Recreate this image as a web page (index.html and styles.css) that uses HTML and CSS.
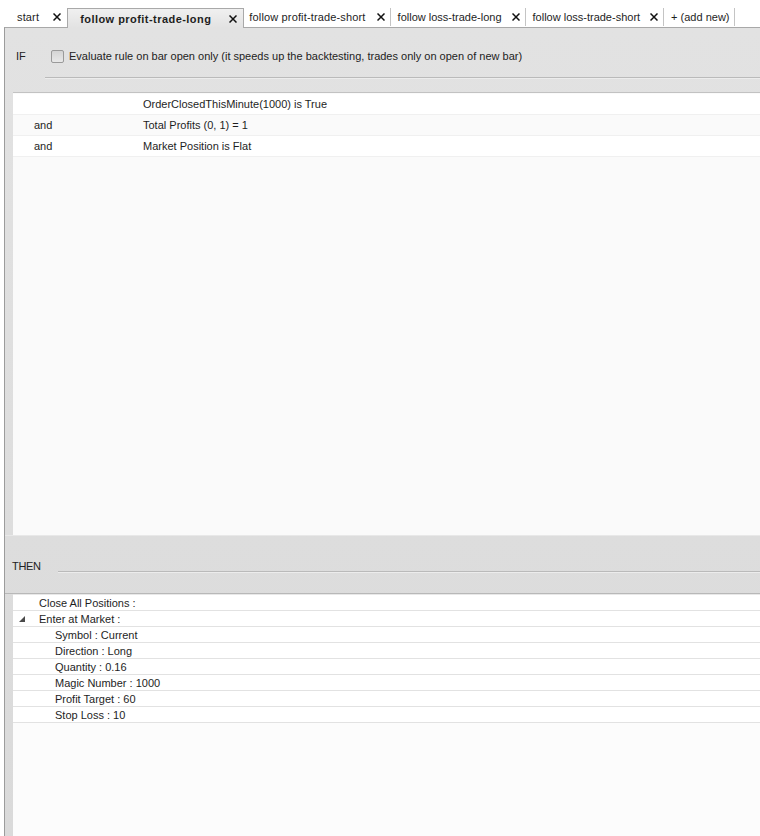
FILE: index.html
```html
<!DOCTYPE html>
<html>
<head>
<meta charset="utf-8">
<link rel="stylesheet" href="styles.css">
</head>
<body>
<div class="tabs">
  <div class="tab first"><span>start</span><svg class="x" viewBox="0 0 8 8"><path d="M0.5 0.5L7.5 7.5M7.5 0.5L0.5 7.5"/></svg></div>
  <div class="tab active"><span>follow profit-trade-long</span><svg class="x" viewBox="0 0 8 8"><path d="M0.5 0.5L7.5 7.5M7.5 0.5L0.5 7.5"/></svg></div>
  <div class="tab sep"><span>follow profit-trade-short</span><svg class="x" viewBox="0 0 8 8"><path d="M0.5 0.5L7.5 7.5M7.5 0.5L0.5 7.5"/></svg></div>
  <div class="tab sep loss"><span>follow loss-trade-long</span><svg class="x" viewBox="0 0 8 8"><path d="M0.5 0.5L7.5 7.5M7.5 0.5L0.5 7.5"/></svg></div>
  <div class="tab sep loss"><span>follow loss-trade-short</span><svg class="x" viewBox="0 0 8 8"><path d="M0.5 0.5L7.5 7.5M7.5 0.5L0.5 7.5"/></svg></div>
  <div class="tab sep add"><span>+ (add new)</span></div>
</div>
<div class="panel">
  <div class="if-area">
    <span class="if-label">IF</span>
    <span class="checkbox"></span>
    <span class="if-text">Evaluate rule on bar open only (it speeds up the backtesting, trades only on open of new bar)</span>
  </div>
  <div class="rule if-rule"></div>
  <div class="cond-table">
    <div class="crow"><span class="c1"></span><span class="c2">OrderClosedThisMinute(1000) is True</span></div>
    <div class="crow alt"><span class="c1">and</span><span class="c2">Total Profits (0, 1) = 1</span></div>
    <div class="crow"><span class="c1">and</span><span class="c2">Market Position is Flat</span></div>
  </div>
  <div class="then-area">
    <span class="then-label">THEN</span>
    <div class="rule then-rule"></div>
  </div>
  <div class="actions">
    <div class="arow"><span class="gut"></span><span class="atext">Close All Positions :</span></div>
    <div class="arow"><span class="gut"><svg class="tri" viewBox="0 0 6 6"><path d="M6 0L6 6L0 6Z"/></svg></span><span class="atext">Enter at Market :</span></div>
    <div class="arow child"><span class="gut"></span><span class="atext">Symbol : Current</span></div>
    <div class="arow child"><span class="gut"></span><span class="atext">Direction : Long</span></div>
    <div class="arow child"><span class="gut"></span><span class="atext">Quantity : 0.16</span></div>
    <div class="arow child"><span class="gut"></span><span class="atext">Magic Number : 1000</span></div>
    <div class="arow child"><span class="gut"></span><span class="atext">Profit Target : 60</span></div>
    <div class="arow child"><span class="gut"></span><span class="atext">Stop Loss : 10</span></div>
  </div>
</div>
</body>
</html>
```

FILE: styles.css
```css
html, body {
  margin: 0;
  padding: 0;
}
body {
  width: 760px;
  height: 836px;
  overflow: hidden;
  background: #ffffff;
  font-family: "Liberation Sans", Arial, sans-serif;
  font-size: 11px;
  color: #1e1e1e;
}
.tabs {
  height: 27px;
  display: flex;
  align-items: flex-end;
  padding-left: 10px;
  box-sizing: border-box;
  background: #fff;
}
.tab {
  height: 19px;
  display: flex;
  align-items: center;
  padding: 0 5px 0 5px;
  box-sizing: border-box;
  position: relative;
  margin-bottom: 1px;
  letter-spacing: 0.15px;
}
.tab span {
  white-space: nowrap;
  line-height: 14px;
}
.tab .x {
  width: 8px;
  height: 8px;
  margin-left: 11px;
  stroke: #111;
  stroke-width: 1.5;
  fill: none;
}
.tab.first {
  padding-left: 7px;
  padding-right: 6px;
}
.tab.first .x {
  margin-left: 14px;
}
.tab.active {
  height: 20px;
  margin-bottom: -1px;
  padding: 0 6px 0 12px;
  font-weight: bold;
  letter-spacing: 0.45px;
  background: linear-gradient(#f0f0f0, #e2e2e2);
  border: 1px solid #a9a9a9;
  border-bottom: none;
  z-index: 2;
}
.tab.active .x {
  margin-left: 18px;
}
.tab.sep::after {
  content: "";
  position: absolute;
  right: 0;
  top: 1px;
  bottom: 0;
  width: 1px;
  background: #c4c4c4;
}
.tab.sep {
  padding-right: 6px;
}
.tab.loss {
  letter-spacing: 0;
  padding-left: 7px;
}
.tab.loss .x {
  margin-left: 10px;
}
.tab.add {
  padding-left: 7px;
  padding-right: 5px;
  letter-spacing: 0;
}
.panel {
  margin-left: 4px;
  height: 809px;
  border-left: 1px solid #9c9c9c;
  border-top: 1px solid #a8a8a8;
  background: linear-gradient(180deg, #e2e2e2 0%, #dadada 100%);
  display: flex;
  flex-direction: column;
  box-sizing: border-box;
}
.if-area {
  height: 49px;
  display: flex;
  align-items: center;
  padding-top: 7px;
  box-sizing: border-box;
}
.if-label {
  margin-left: 11px;
  width: 35px;
  color: #222;
}
.checkbox {
  width: 13px;
  height: 13px;
  box-sizing: border-box;
  border: 1px solid #9a9a9a;
  border-radius: 2px;
  background: linear-gradient(#d4d4d4, #e8e8e8);
  margin-right: 5px;
}
.if-text {
  white-space: nowrap;
  color: #222;
}
.rule {
  height: 1px;
  background: #bababa;
  border-bottom: 1px solid #ececec;
}
.if-rule {
  margin-left: 40px;
}
.cond-table {
  margin-top: 13px;
  margin-left: 8px;
  height: 443px;
  border-top: 1px solid #c2c2c2;
  background: #fafafa;
  box-sizing: border-box;
  padding-top: 1px;
}
.crow {
  height: 21px;
  display: flex;
  align-items: center;
  background: #ffffff;
  border-bottom: 1px solid #f0f0f0;
  box-sizing: border-box;
}
.crow.alt {
  background: #fafafa;
}
.c1 {
  width: 109px;
  padding-left: 21px;
  box-sizing: content-box;
}
.c2 {
  white-space: nowrap;
}
.then-area {
  height: 59px;
  display: flex;
  align-items: center;
  border-top: 1px solid #e8e8e8;
  border-bottom: 1px solid #b8b8b8;
  box-sizing: border-box;
  padding-top: 3px;
}
.then-label {
  margin-left: 7px;
  width: 46px;
  color: #222;
  letter-spacing: -0.3px;
}
.then-rule {
  flex: 1;
  margin-top: 12px;
}
.actions {
  margin-left: 8px;
  flex: 1;
  background: #fcfcfc;
  border-top: 1px solid #e8e8e8;
}
.arow {
  height: 16px;
  display: flex;
  align-items: center;
  background: #fff;
  border-bottom: 1px solid #e2e2e2;
  box-sizing: border-box;
}
.gut {
  width: 26px;
  height: 100%;
  display: flex;
  align-items: center;
  justify-content: flex-start;
  padding-left: 6px;
  box-sizing: border-box;
}
.tri {
  width: 6px;
  height: 6px;
  fill: #4a4a4a;
}
.atext {
  white-space: nowrap;
}
.arow.child .atext {
  margin-left: 16px;
}
```
